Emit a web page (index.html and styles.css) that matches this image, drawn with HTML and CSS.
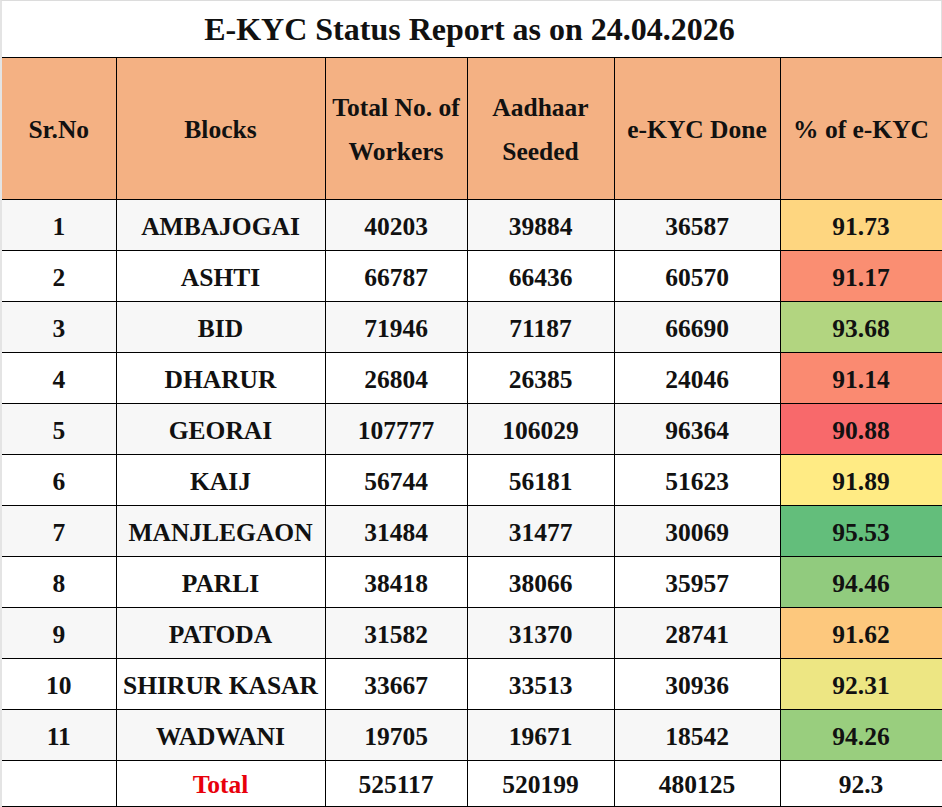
FILE: index.html
```html
<!DOCTYPE html>
<html>
<head>
<meta charset="utf-8">
<link rel="stylesheet" href="styles.css">
</head>
<body>
<div class="page">
  <div class="title">E-KYC Status Report as on 24.04.2026</div>
  <table class="report">
    <colgroup>
      <col class="c1"><col class="c2"><col class="c3"><col class="c4"><col class="c5"><col class="c6">
    </colgroup>
    <thead>
      <tr class="head">
        <th>Sr.No</th>
        <th>Blocks</th>
        <th>Total No. of<br>Workers</th>
        <th>Aadhaar<br>Seeded</th>
        <th>e-KYC Done</th>
        <th>% of e-KYC</th>
      </tr>
    </thead>
    <tbody>
      <tr class="row alt"><td>1</td><td>AMBAJOGAI</td><td>40203</td><td>39884</td><td>36587</td><td class="pct" style="background:#fed680">91.73</td></tr>
      <tr class="row"><td>2</td><td>ASHTI</td><td>66787</td><td>66436</td><td>60570</td><td class="pct" style="background:#fa8e72">91.17</td></tr>
      <tr class="row alt"><td>3</td><td>BID</td><td>71946</td><td>71187</td><td>66690</td><td class="pct" style="background:#b2d580">93.68</td></tr>
      <tr class="row"><td>4</td><td>DHARUR</td><td>26804</td><td>26385</td><td>24046</td><td class="pct" style="background:#fa8a71">91.14</td></tr>
      <tr class="row alt"><td>5</td><td>GEORAI</td><td>107777</td><td>106029</td><td>96364</td><td class="pct" style="background:#f8696b">90.88</td></tr>
      <tr class="row"><td>6</td><td>KAIJ</td><td>56744</td><td>56181</td><td>51623</td><td class="pct" style="background:#ffeb84">91.89</td></tr>
      <tr class="row alt"><td>7</td><td>MANJLEGAON</td><td>31484</td><td>31477</td><td>30069</td><td class="pct" style="background:#63be7b">95.53</td></tr>
      <tr class="row"><td>8</td><td>PARLI</td><td>38418</td><td>38066</td><td>35957</td><td class="pct" style="background:#91cb7e">94.46</td></tr>
      <tr class="row alt"><td>9</td><td>PATODA</td><td>31582</td><td>31370</td><td>28741</td><td class="pct" style="background:#fdc87d">91.62</td></tr>
      <tr class="row"><td>10</td><td>SHIRUR KASAR</td><td>33667</td><td>33513</td><td>30936</td><td class="pct" style="background:#ede683">92.31</td></tr>
      <tr class="row alt"><td>11</td><td>WADWANI</td><td>19705</td><td>19671</td><td>18542</td><td class="pct" style="background:#99ce7e">94.26</td></tr>
      <tr class="total"><td></td><td class="total-label">Total</td><td>525117</td><td>520199</td><td>480125</td><td>92.3</td></tr>
    </tbody>
  </table>
</div>
</body>
</html>
```
FILE: styles.css
```css
html, body {
  margin: 0;
  padding: 0;
  background: #ffffff;
}

.page {
  width: 942px;
  height: 807px;
  box-sizing: border-box;
  border-top: 1px solid #dcdcdc;
  border-left: 2px solid #e4e4e4;
  overflow: hidden;
  font-family: "Liberation Serif", "Times New Roman", serif;
  font-weight: bold;
  color: #111111;
}

.title {
  height: 56px;
  box-sizing: border-box;
  border-right: 1px solid #e0e0e0;
  text-align: center;
  font-size: 32px;
  line-height: 56px;
  padding-right: 4px;
}

.report {
  width: 940px;
  border-collapse: collapse;
  table-layout: fixed;
  border-top: 1px solid #000;
}

.c1 { width: 114px; }
.c2 { width: 209px; }
.c3 { width: 142px; }
.c4 { width: 147px; }
.c5 { width: 166px; }
.c6 { width: 162px; }

.report th,
.report td {
  border-right: 1px solid #000;
  border-bottom: 1px solid #000;
  padding: 0;
  text-align: center;
  vertical-align: middle;
  font-size: 25.5px;
  font-weight: bold;
  white-space: nowrap;
}

.head {
  height: 142px;
  background: #f4b183;
}

.head th {
  line-height: 44px;
  padding-top: 2px;
}

.row {
  height: 51px;
  background: #ffffff;
}

.row.alt {
  background: #f7f7f7;
}

.row td {
  padding-top: 3px;
}

.total {
  height: 46px;
  background: #ffffff;
}

.total td {
  padding-top: 2px;
}

.total-label {
  color: #e8000b;
}
```
